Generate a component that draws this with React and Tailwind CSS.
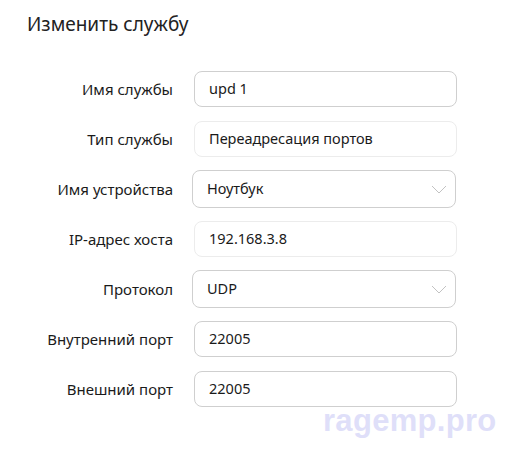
import React from 'react';

const fields = [
  { label: 'Имя службы', value: 'upd 1', kind: 'input' },
  { label: 'Тип службы', value: 'Переадресация портов', kind: 'readonly' },
  { label: 'Имя устройства', value: 'Ноутбук', kind: 'select' },
  { label: 'IP-адрес хоста', value: '192.168.3.8', kind: 'readonly' },
  { label: 'Протокол', value: 'UDP', kind: 'select' },
  { label: 'Внутренний порт', value: '22005', kind: 'input' },
  { label: 'Внешний порт', value: '22005', kind: 'input' },
];

const Chevron = () => (
  <svg width="16" height="9" viewBox="0 0 16 9" fill="none" className="mr-[8px]">
    <path d="M1 1l7 7 7-7" stroke="#c2c2c2" strokeWidth="1" />
  </svg>
);

const Field = ({ field }) => {
  if (field.kind === 'select') {
    return (
      <div className="flex h-[38px] w-[264px] items-center justify-between rounded-[8px] border border-[#cfcfcf] bg-white pl-[14px] -ml-[2px]">
        <span>{field.value}</span>
        <Chevron />
      </div>
    );
  }
  const border = field.kind === 'readonly' ? 'border-[#ececec]' : 'border-[#cfcfcf]';
  return (
    <div className={`flex h-[36px] w-[263px] items-center rounded-[8px] border bg-white pl-[14px] ${border}`}>
      {field.value}
    </div>
  );
};

export default function App() {
  return (
    <div
      className="relative h-[449px] w-[506px] bg-white text-[#1a1a1a]"
      style={{ fontFamily: '"Noto Sans", "Open Sans", sans-serif' }}
    >
      <h1 className="pl-[27px] pt-[10px] text-[19px] font-normal text-[#222]">Изменить службу</h1>
      <div className="mt-[32px] flex flex-col gap-[13px]">
        {fields.map((f) => (
          <div key={f.label} className="flex h-[37px] items-center">
            <div className="w-[174px] pr-[1px] text-right text-[15px]">{f.label}</div>
            <div className="ml-[20px] text-[14.5px]">
              <Field field={f} />
            </div>
          </div>
        ))}
      </div>
      <div
        className="absolute left-[323px] top-[398px] text-[31px] font-bold tracking-[0.3px] text-[#dfdff9]"
        style={{ fontFamily: '"Liberation Sans", Arial, sans-serif' }}
      >
        ragemp.pro
      </div>
    </div>
  );
}
